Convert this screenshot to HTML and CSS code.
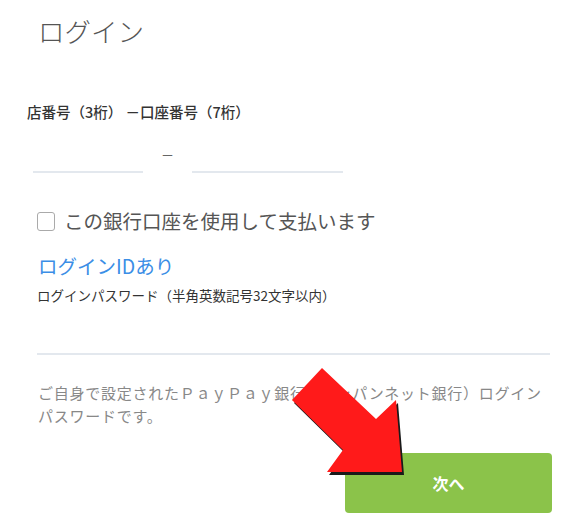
FILE: index.html
```html
<!DOCTYPE html>
<html lang="ja">
<head>
	<meta charset="UTF-8">
	<title>ログイン</title>
	<link rel="stylesheet" href="styles.css">
</head>
<body>
<div class="page">
	<h1 class="title">ログイン</h1>

	<p class="label label-branch">店番号（3桁） －口座番号（7桁）</p>
	<div class="account">
		<div class="line line-branch"></div>
		<span class="dash">－</span>
		<div class="line line-number"></div>
	</div>

	<label class="check">
		<span class="box"></span>
		<span>この銀行口座を使用して支払います</span>
	</label>

	<a class="link" href="#">ログインIDあり</a>

	<p class="label label-pass">ログインパスワード（半角英数記号32文字以内）</p>
	<div class="line line-pass"></div>

	<p class="note">ご自身で設定されたＰａｙＰａｙ銀行（ジャパンネット銀行）ログインパスワードです。</p>

	<div class="actions">
		<button class="next">次へ</button>
	</div>

	<!-- 注釈の矢印 -->
	<svg class="arrow" width="120" height="115" viewBox="0 0 120 115">
		<polygon points="34,6 4,38 55,88 39,110 114,110 108,38 88,57" fill="#1a1a1a"/>
		<polygon points="32,3 2,35 53,85 37,107 112,107 106,35 86,54" fill="#ff1a1a"/>
	</svg>
</div>
</body>
</html>
```
FILE: styles.css
```css
*{
	box-sizing: border-box;
}
body{
	margin: 0;
	background: #fff;
	font-family: "Noto Sans CJK JP", "Noto Sans", sans-serif;
	color: #333;
}
.page{
	position: relative;
	width: 567px;
	height: 528px;
	padding: 12px 0 0 37px;
}
.title{
	margin: 0 0 0 1px;
	font-size: 26.5px;
	font-weight: 300;
	line-height: 38px;
	color: #555;
}
.label{
	margin: 0;
	font-size: 13.5px;
	line-height: 18px;
	color: #333;
}
.label-branch{
	margin: 53px 0 0 -10px;
	font-size: 14.5px;
	font-weight: 500;
}
.account{
	display: flex;
	align-items: flex-end;
	margin: 24px 0 0 -4px;
}
.line{
	height: 2px;
	background: #e3e8ee;
}
.line-branch{
	width: 110px;
}
.dash{
	width: 49px;
	margin-bottom: 8px;
	text-align: center;
	font-size: 13px;
	line-height: 20px;
	color: #666;
}
.line-number{
	width: 151px;
}
.check{
	display: flex;
	align-items: center;
	gap: 9px;
	margin-top: 35px;
	font-size: 19.5px;
	line-height: 26px;
	color: #555;
}
.box{
	width: 18px;
	height: 19px;
	border: 1px solid #aaa;
	border-radius: 3px;
}
.link{
	display: block;
	margin: 19px 0 0 1px;
	font-size: 19.5px;
	line-height: 26px;
	color: #3b8ee6;
	text-decoration: none;
}
.label-pass{
	margin-top: 7px;
}
.line-pass{
	width: 513px;
	margin-top: 49px;
}
.note{
	width: 515px;
	margin: 26px 0 0 1px;
	font-size: 15px;
	letter-spacing: 0.75px;
	line-height: 23px;
	color: #888;
}
.actions{
	display: flex;
	justify-content: flex-end;
	width: 515px;
	margin-top: 26px;
}
.next{
	width: 207px;
	height: 60px;
	border: 0;
	border-radius: 4px;
	background: #8bc34a;
	color: #fff;
	font-family: inherit;
	font-size: 16px;
	font-weight: 700;
}
.arrow{
	position: absolute;
	left: 290px;
	top: 365px;
}
```
